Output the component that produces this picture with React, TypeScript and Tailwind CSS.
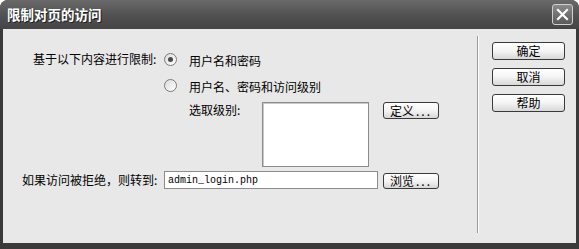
import React from "react";

const cjk = "font-['SimSun','Noto_Sans_CJK_SC',sans-serif]";

const Radio = ({ checked }: { checked?: boolean }) => (
  <div className="w-[13px] h-[13px] rounded-full border border-[#7a7a7a] bg-gradient-to-br from-[#dcdcdc] to-white flex items-center justify-center shrink-0">
    {checked && <div className="w-[5px] h-[5px] rounded-full bg-[#4a4a4a]" />}
  </div>
);

const Btn = ({ label, dots, w, h }: { label: string; dots?: boolean; w: string; h: string }) => (
  <button
    className={`${w} ${h} rounded-[3px] border border-[#3a3a3a] bg-gradient-to-b from-white via-[#f4f4f4] to-[#d8d8d8] text-[12px] leading-none text-black flex items-center justify-center ${cjk}`}
  >
    {label}
    {dots && <span className="tracking-[2px] ml-[2px]">...</span>}
  </button>
);

export default function App() {
  return (
    <div className="w-[579px] h-[249px] bg-[#3a3a3a] rounded-t-[8px] flex flex-col overflow-hidden">
      {/* Title bar */}
      <div className="h-[29px] shrink-0 flex items-center justify-between pl-[7px] pr-[6px] bg-gradient-to-b from-[#6a6a6a] via-[#525252] to-[#454545]">
        <span
          className={`text-white text-[13.5px] font-bold leading-none [text-shadow:1px_1px_0_#222] ${cjk}`}
        >
          限制对页的访问
        </span>
        <div className="w-[21px] h-[21px] rounded-[3px] border border-[#d0d0d0] bg-gradient-to-b from-[#8a8a8a] to-[#5a5a5a] flex items-center justify-center">
          <svg width="13" height="13" viewBox="0 0 13 13">
            <path d="M2 2 L11 11 M11 2 L2 11" stroke="white" strokeWidth="2.2" strokeLinecap="square" />
          </svg>
        </div>
      </div>

      {/* Body */}
      <div className={`flex-1 mx-[3px] mb-[6px] bg-[#e8e8e8] flex text-[12px] text-black ${cjk}`}>
        <div className="w-[474px] flex flex-col">
          {/* row 1 */}
          <div className="mt-[21px] h-[18px] flex items-center">
            <div className="w-[161px] pl-[30px] leading-none">基于以下内容进行限制:</div>
            <Radio checked />
            <span className="ml-[12px] mt-[3px] leading-none">用户名和密码</span>
          </div>
          {/* row 2 */}
          <div className="mt-[8px] h-[18px] flex items-center">
            <div className="w-[161px]" />
            <Radio />
            <span className="ml-[12px] mt-[3px] leading-none">用户名、密码和访问级别</span>
          </div>
          {/* row 3 */}
          <div className="mt-[8px] flex items-start">
            <div className="w-[259px] pl-[186px] h-4 leading-4">选取级别:</div>
            <div className="w-[107px] h-[65px] bg-white border border-[#8c8c8c] shadow-[inset_1px_1px_0_#c8c8c8]" />
            <div className="ml-[14px]">
              <Btn label="定义" dots w="w-[56px]" h="h-[17px]" />
            </div>
          </div>
          {/* row 4 */}
          <div className="mt-[4px] flex items-start">
            <div className="w-[161px] pl-[19px] h-[18px] leading-[18px]">如果访问被拒绝，则转到:</div>
            <div className="w-[214px] h-[18px] bg-white border border-[#8c8c8c] flex items-center pl-[3px] font-['Liberation_Mono',monospace] text-[10px]">
              admin_login.php
            </div>
            <div className="ml-[5px] mt-[2px]">
              <Btn label="浏览" dots w="w-[56px]" h="h-[16px]" />
            </div>
          </div>
        </div>
        {/* separator */}
        <div className="mt-[7px] h-[197px] w-[2px] flex">
          <div className="w-px bg-[#9a9a9a]" />
          <div className="w-px bg-white" />
        </div>
        {/* right buttons */}
        <div className="ml-[13px] mt-[13px] flex flex-col gap-[8px]">
          <Btn label="确定" w="w-[73px]" h="h-[18px]" />
          <Btn label="取消" w="w-[73px]" h="h-[18px]" />
          <Btn label="帮助" w="w-[73px]" h="h-[18px]" />
        </div>
      </div>
    </div>
  );
}
